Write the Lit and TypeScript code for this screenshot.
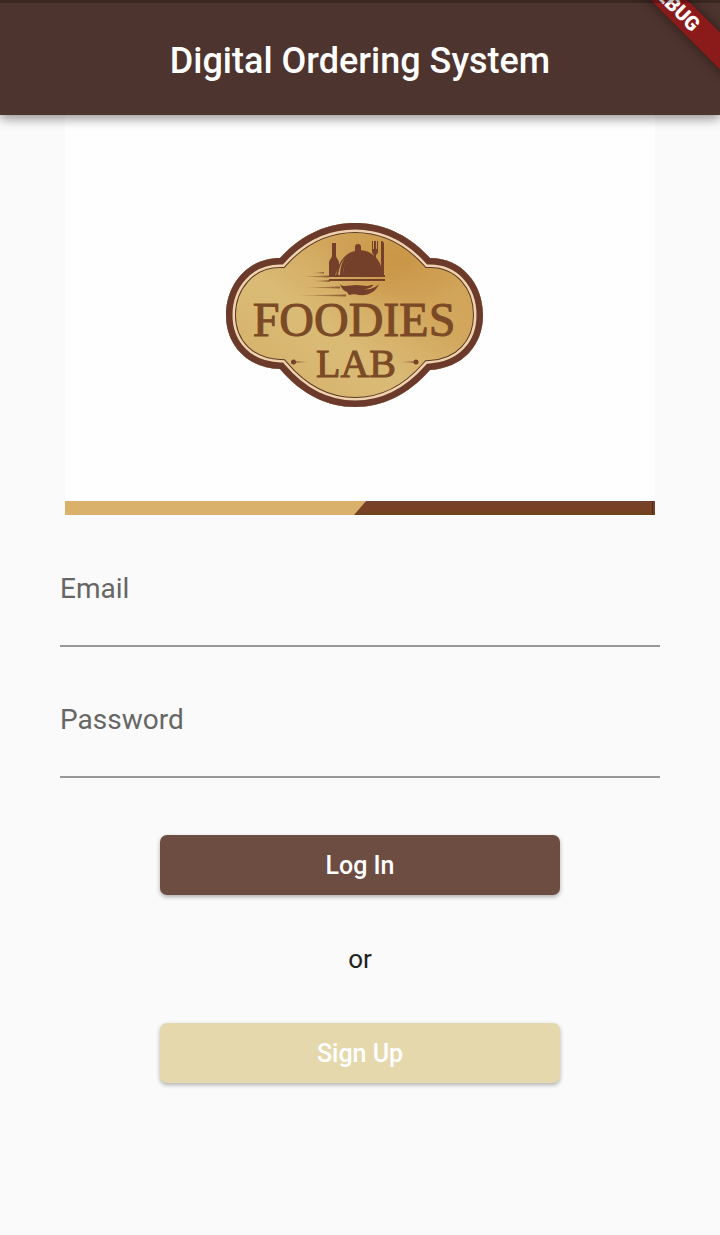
import { LitElement, html, css } from "lit";
import { customElement } from "lit/decorators.js";

const BADGE =
  "M280 258C302 234 328 223 355 223C382 223 408 234 430 258C462 258 483 284 483 315C483 346 462 368 430 370C408 395 382 407 355 407C328 407 302 395 280 369C248 368 226 346 226 315C226 284 248 258 280 258Z";

@customElement("foodies-logo")
export class FoodiesLogo extends LitElement {
  static styles = css`
    :host { display: block; }
    svg { display: block; width: 100%; height: auto; }
    .word {
      font-family: "Liberation Serif", serif;
      fill: #7a4a26;
      stroke: #7a4a26;
      stroke-width: 1;
      text-anchor: middle;
    }
    .name { font-size: 48px; }
    .sub { font-size: 40px; }
  `;

  render() {
    return html`
      <svg viewBox="65 115 590 400" role="img" aria-label="Foodies Lab">
        <defs>
          <linearGradient id="gold" x1="0" y1="1" x2="1" y2="0">
            <stop offset="0" stop-color="#d3ad66" />
            <stop offset="0.4" stop-color="#dabb76" />
            <stop offset="0.65" stop-color="#d2a65c" />
            <stop offset="1" stop-color="#cfa355" />
          </linearGradient>
          <radialGradient id="amber" cx="0.66" cy="0.2" r="0.3">
            <stop offset="0" stop-color="#c48a38" stop-opacity="0.6" />
            <stop offset="1" stop-color="#c48a38" stop-opacity="0" />
          </radialGradient>
          <linearGradient id="trail" x1="0" x2="1" y1="0" y2="0">
            <stop offset="0" stop-color="#7a4624" stop-opacity="0.1" />
            <stop offset="1" stop-color="#7a4624" stop-opacity="0.8" />
          </linearGradient>
          <linearGradient id="trail-back" x1="1" x2="0" y1="0" y2="0">
            <stop offset="0" stop-color="#7a4624" stop-opacity="0.1" />
            <stop offset="1" stop-color="#7a4624" stop-opacity="0.8" />
          </linearGradient>
          <linearGradient id="bar" x1="0" x2="0" y1="0" y2="1">
            <stop offset="0" stop-color="#74412f" />
            <stop offset="0.5" stop-color="#7a4026" />
            <stop offset="1" stop-color="#70441f" />
          </linearGradient>
          <clipPath id="edge"><path d=${BADGE} /></clipPath>
        </defs>
        <rect x="65" y="115" width="590" height="400" fill="#fefefe" />

        <g clip-path="url(#edge)">
          <path d=${BADGE} fill="url(#gold)" />
          <path d=${BADGE} fill="url(#amber)" />
          <path d=${BADGE} fill="none" stroke="#5c3b26" stroke-width="20" />
          <path d=${BADGE} fill="none" stroke="#f0d2ae" stroke-width="18" />
          <path d=${BADGE} fill="none" stroke="#6b3a2a" stroke-width="13" />
        </g>

        <g fill="#74402a">
          <path d="M332 243h4v12c0 4 3 4 3 8v4c-2 3-3 6-4 9h-6v-13c0-4 3-4 3-8z" />
          <path d="M336 276c2-14 9-23 19-25c-8 6-12 14-12 25h-3c0-8 2-14 5-18c-4 4-6 10-7 18z" />
          <path d="M343 276c0-10 3-18 9-23c2-2 5-3 7-3c13 0 23 10 24 26z" />
          <path d="M355 251v-4a3 3 0 0 1 6 0v4z" />
          <path d="M372 241v10c0 2 1 3 2 4v10l2 2v-12c1-1 2-2 2-4v-10h-1v8h-1v-8h-2v8h-1v-8z" />
          <path d="M381 241c2 0 3 1 3 3v32h-3z" />
          <rect x="329" y="275" width="56" height="2" />
          <rect x="329" y="279" width="56" height="2" />
          <path d="M340 284c1 1 2 2 4 2c5 0 8-1 12-1c5 0 8 1 11 1c3 0 5-2 6-1c0 2-5 4-9 4c6 1 11-1 15-5c-3 8-11 12-20 11c-4-1-6-1-10 0l-2-3c-3-1-6-4-7-8z" />
        </g>
        <g fill="url(#trail)">
          <path d="M312 273l12-1v1.500z" />
          <path d="M302 276.500l27-1v2z" />
          <path d="M312 281l18-1v2z" />
          <path d="M304 287.500l36-1v2z" />
          <path d="M296 295.500l50-1v2z" />
        </g>

        <text class="word name" x="354" y="336">FOODIES</text>
        <text class="word sub" x="356" y="377">LAB</text>
        <g fill="#74402a">
          <circle cx="293.500" cy="362" r="2.500" />
          <circle cx="416" cy="362" r="2.500" />
        </g>
        <path d="M293 361l17 1l-17 1z" fill="url(#trail-back)" />
        <path d="M416 361l-17 1l17 1z" fill="url(#trail)" />

        <rect x="65" y="501" width="300" height="14" fill="#d9b16b" />
        <path d="M366 501h289v14h-301z" fill="url(#bar)" />
        <rect x="652" y="501" width="1" height="14" fill="#4c2a1a" />
      </svg>
    `;
  }
}

@customElement("app-root")
export class AppRoot extends LitElement {
  static styles = css`
    :host {
      display: block;
      min-height: 100vh;
      background: #fafafa;
      font-family: Roboto, sans-serif;
      color: #212121;
    }
    * { box-sizing: border-box; }
    .bar {
      position: relative;
      overflow: hidden;
      display: flex;
      justify-content: center;
      height: 115px;
      padding-top: 39px;
      background: #4e342e;
    }
    .bar::after {
      content: "";
      position: absolute;
      inset: 0 0 auto;
      height: 3px;
      background: rgba(0, 0, 0, 0.25);
    }
    .bar-shadow {
      position: relative;
      box-shadow: 0 4px 10px rgba(0, 0, 0, 0.4);
    }
    .title { margin: 0; color: #fff; font-size: 36px; line-height: 44px; font-weight: 500; }
    .ribbon {
      position: absolute;
      top: -8px;
      right: -44px;
      width: 180px;
      height: 26px;
      transform: rotate(45deg);
      background: #8b1a1a;
      box-shadow: 0 0 12px rgba(0, 0, 0, 0.5);
      color: #fff;
      font-size: 20px;
      line-height: 26px;
      font-weight: 900;
      text-align: center;
    }
    .page { padding: 0 60px 60px; }
    .logo { margin: 0 5px 1px; }
    .form { display: flex; flex-direction: column; align-items: center; }
    .field {
      position: relative;
      width: 100%;
      height: 131px;
      border-bottom: 2px solid #989898;
    }
    .label {
      position: absolute;
      bottom: 39px;
      left: 0;
      color: #666;
      font-size: 28px;
      line-height: 34px;
      pointer-events: none;
    }
    .input {
      display: block;
      width: 100%;
      height: 100%;
      padding: 40px 0 0;
      border: 0;
      outline: 0;
      background: transparent;
      font: inherit;
      font-size: 28px;
    }
    .input:focus + .label, .input:not(:placeholder-shown) + .label { bottom: 76px; font-size: 20px; }
    .button {
      width: 400px;
      max-width: 100%;
      height: 60px;
      border: 0;
      border-radius: 7px;
      color: #fff;
      font-family: inherit;
      font-size: 25px;
      font-weight: 500;
      box-shadow: 0 2px 4px rgba(0, 0, 0, 0.3);
    }
    .login { margin-top: 57px; background: #6d4c41; }
    .signup { background: #e6d8ad; }
    .or { margin: 48px 0; font-size: 26px; line-height: 32px; }
  `;

  render() {
    return html`
      <header class="bar-shadow">
        <div class="bar">
          <h1 class="title">Digital Ordering System</h1>
          <div class="ribbon">DEBUG</div>
        </div>
      </header>
      <main class="page">
        <foodies-logo class="logo"></foodies-logo>
        <form class="form" @submit=${(e: Event) => e.preventDefault()}>
          <div class="field">
            <input class="input" id="email" type="email" placeholder=" " />
            <label class="label" for="email">Email</label>
          </div>
          <div class="field">
            <input class="input" id="password" type="password" placeholder=" " />
            <label class="label" for="password">Password</label>
          </div>
          <button class="button login" type="submit">Log In</button>
          <p class="or">or</p>
          <button class="button signup" type="button">Sign Up</button>
        </form>
      </main>
    `;
  }
}
